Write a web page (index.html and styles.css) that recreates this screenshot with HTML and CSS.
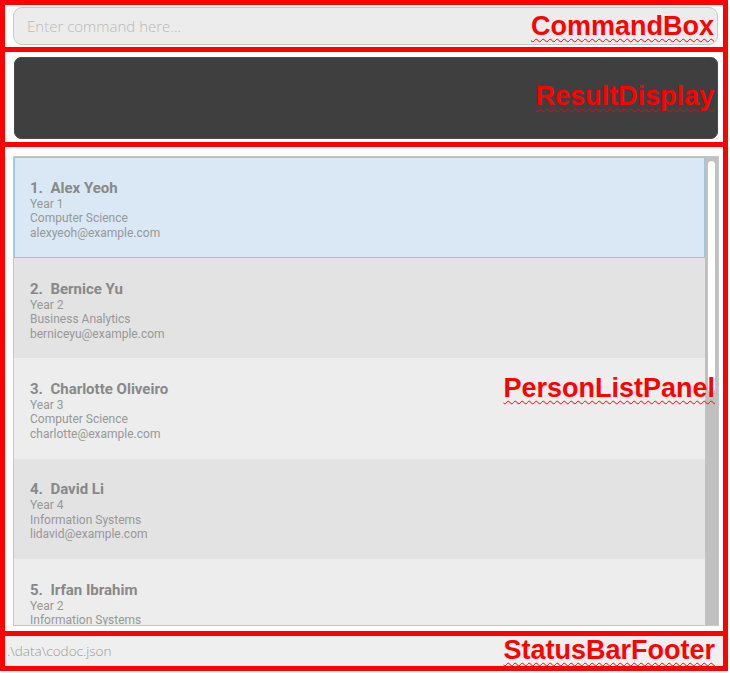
FILE: index.html
```html
<!DOCTYPE html>
<html>
<head>
<meta charset="utf-8">
<link rel="stylesheet" href="styles.css">
</head>
<body>
<div class="frame">
  <section class="sec command-sec">
    <div class="command-field">Enter command here...</div>
    <span class="label label-command">CommandBox</span>
  </section>
  <section class="sec result-sec">
    <div class="result-box"></div>
    <span class="label label-result">ResultDisplay</span>
  </section>
  <section class="sec list-sec">
    <div class="person-list">
      <div class="cards">
        <div class="card selected">
          <div class="name">1.&nbsp;&nbsp;Alex Yeoh</div>
          <div class="detail">Year 1</div>
          <div class="detail">Computer Science</div>
          <div class="detail">alexyeoh@example.com</div>
        </div>
        <div class="card even">
          <div class="name">2.&nbsp;&nbsp;Bernice Yu</div>
          <div class="detail">Year 2</div>
          <div class="detail">Business Analytics</div>
          <div class="detail">berniceyu@example.com</div>
        </div>
        <div class="card odd">
          <div class="name">3.&nbsp;&nbsp;Charlotte Oliveiro</div>
          <div class="detail">Year 3</div>
          <div class="detail">Computer Science</div>
          <div class="detail">charlotte@example.com</div>
        </div>
        <div class="card even">
          <div class="name">4.&nbsp;&nbsp;David Li</div>
          <div class="detail">Year 4</div>
          <div class="detail">Information Systems</div>
          <div class="detail">lidavid@example.com</div>
        </div>
        <div class="card odd last">
          <div class="name">5.&nbsp;&nbsp;Irfan Ibrahim</div>
          <div class="detail">Year 2</div>
          <div class="detail">Information Systems</div>
        </div>
      </div>
      <div class="scrollbar"><div class="thumb"></div></div>
    </div>
    <span class="label label-list">PersonListPanel</span>
  </section>
  <section class="sec footer-sec">
    <div class="footer-text">.\data\codoc.json</div>
    <span class="label label-footer">StatusBarFooter</span>
  </section>
</div>
</body>
</html>
```
FILE: styles.css
```css
html, body {
  margin: 0;
  padding: 0;
  background: #ffffff;
}
.frame {
  width: 718px;
  border: 5px solid #ff0000;
  display: flex;
  flex-direction: column;
}
.sec {
  position: relative;
  box-sizing: border-box;
}
.sec + .sec {
  border-top: 5px solid #ff0000;
}
.command-sec {
  height: 42px;
  padding: 2px 5px 2px 8px;
}
.command-field {
  box-sizing: border-box;
  height: 38px;
  background: #ececec;
  border: 1px solid #c9c9c9;
  border-radius: 9px;
  padding-left: 13px;
  font-family: "Open Sans", sans-serif;
  font-weight: 300;
  font-size: 15px;
  line-height: 36px;
  color: #b9b9b9;
}
.result-sec {
  height: 95px;
  padding: 5px 5px 3px 9px;
}
.result-box {
  box-sizing: border-box;
  height: 82px;
  background: #3f3f3f;
  border: 1px solid #4a4a4a;
  border-radius: 7px;
}
.list-sec {
  height: 489px;
  padding: 9px 4px 5px 8px;
}
.person-list {
  box-sizing: border-box;
  height: 470px;
  border: 1px solid #c6c6c6;
  display: flex;
  overflow: hidden;
}
.cards {
  flex: 1;
  overflow: hidden;
}
.card {
  box-sizing: border-box;
  height: 100.4px;
  padding: 22.5px 16px 0 16px;
  font-family: Roboto, sans-serif;
}
.card.last {
  height: 66px;
  overflow: hidden;
}
.card.selected {
  height: 101px;
  background: #dae8f5;
  border: 1px solid #9dc3e3;
  padding: 21.5px 15px 0 15px;
}
.card.even {
  background: #e3e3e3;
}
.card.odd {
  background: #ededed;
}
.name {
  font-weight: 700;
  font-size: 15px;
  line-height: 17px;
  color: #888888;
}
.detail {
  font-size: 12px;
  line-height: 14.6px;
  color: #979797;
}
.scrollbar {
  width: 13px;
  background: #c0c0c0;
  padding: 4px 3px 0 3px;
  box-sizing: border-box;
}
.thumb {
  height: 231px;
  background: #ffffff;
  border-radius: 4px;
}
.footer-sec {
  height: 35px;
  background: #efefef;
  padding-left: 2px;
}
.footer-text {
  font-family: "Open Sans", sans-serif;
  font-weight: 300;
  font-size: 13.5px;
  line-height: 31px;
  color: #9a9a9a;
}
.label {
  position: absolute;
  right: 9px;
  font-family: "Liberation Sans", Arial, sans-serif;
  font-weight: 700;
  font-size: 27px;
  line-height: 27px;
  color: #ff0000;
  text-decoration: underline wavy #ff0000;
  text-decoration-thickness: 1px;
  text-underline-offset: 3px;
}
.label-command { top: 8px; }
.label-result { top: 31px; }
.label-list { top: 228px; right: 8px; }
.label-footer { top: 1px; right: 8px; }
```
